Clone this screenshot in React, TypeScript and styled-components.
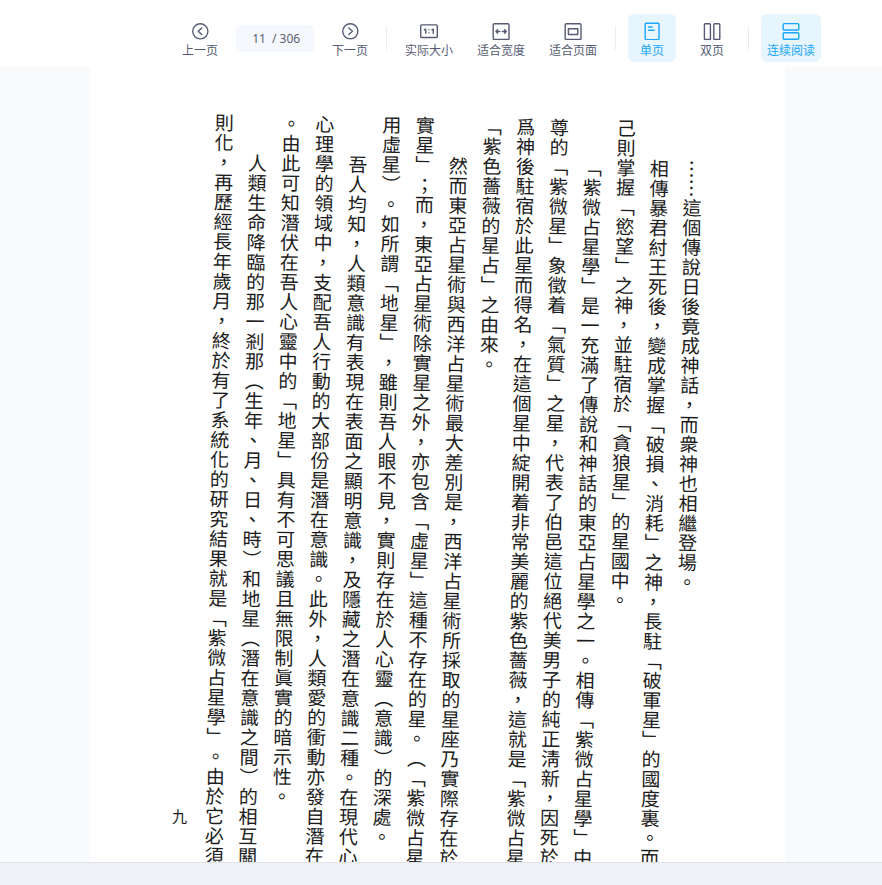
import React, { useState } from 'react';
import styled, { createGlobalStyle } from 'styled-components';

const GlobalStyle = createGlobalStyle`
  *, *::before, *::after { box-sizing: border-box; }
  html, body { margin: 0; }
  body {
    background: #f8fafc;
    font-family: 'Noto Sans', 'Noto Sans CJK SC', sans-serif;
  }
`;

const Screen = styled.div`
  display: flex;
  flex-direction: column;
  height: 100vh;
  overflow: hidden;
`;

const Toolbar = styled.header`
  display: flex;
  flex: none;
  justify-content: center;
  align-items: center;
  gap: 12px;
  height: 67px;
  padding: 14px 0 5px 115px;
  background: #fff;
`;

const ToolButton = styled.button<{ $active?: boolean }>`
  display: flex;
  flex: none;
  flex-direction: column;
  align-items: center;
  gap: 2px;
  height: 48px;
  min-width: 48px;
  padding: 8px 6px 4px;
  border: 0;
  border-radius: 6px;
  background: ${(p) => (p.$active ? '#e6f5fe' : 'transparent')};
  color: ${(p) => (p.$active ? '#1ba6f8' : '#565b73')};
  font: 12px/16px 'Noto Sans CJK SC', sans-serif;
  white-space: nowrap;
  cursor: pointer;
`;

const Icon = styled.svg`
  width: 18px;
  height: 18px;
  flex: none;
  fill: none;
  stroke: currentColor;
  stroke-width: 1.4;
  stroke-linecap: round;
  stroke-linejoin: round;
`;

const Divider = styled.span`
  flex: none;
  width: 1px;
  height: 24px;
  background: #e9ecf2;
`;

const PageField = styled.label`
  display: flex;
  flex: none;
  align-items: center;
  gap: 6px;
  width: 78px;
  height: 27px;
  padding: 2px 12px 0 10px;
  border-radius: 4px;
  background: #f5f8fd;
  color: #5c6070;
  font: 12px/18px 'Noto Sans', sans-serif;
  white-space: nowrap;
`;

const PageInput = styled.input`
  width: 20px;
  padding: 0;
  border: 0;
  outline: 0;
  background: transparent;
  color: inherit;
  font: inherit;
  text-align: right;
`;

const Viewer = styled.main`
  flex: 1;
  min-height: 0;
  padding: 0 97px 0 90px;
  overflow: hidden;
  background: #f8fafc;
`;

const Sheet = styled.article`
  display: flex;
  align-items: flex-start;
  min-height: 100%;
  padding: 46px 82px 0 82px;
  background: #fff;
  color: #1c1c1c;
  font-family: 'Noto Sans CJK TC', sans-serif;
`;

const Folio = styled.span`
  flex: none;
  width: 42px;
  padding-top: 692px;
  font-size: 15px;
  line-height: 22px;
`;

/* The scanned sheet sits slightly askew. */
const Columns = styled.div`
  display: flex;
  flex: 1;
  flex-direction: row-reverse;
  justify-content: space-between;
  transform: rotate(0.8deg);
  transform-origin: 0 0;
`;

const Column = styled.p<{ $length: number; $indent?: boolean }>`
  width: 20px;
  height: ${(p) => p.$length}px;
  margin: ${(p) => (p.$indent ? '40px' : '0')} 0 0;
  writing-mode: vertical-rl;
  font-size: 19px;
  font-weight: 400;
  line-height: 20px;
  white-space: nowrap;
  text-align: justify;
  text-align-last: justify;
  text-spacing-trim: space-all;
`;

const Footer = styled.footer`
  flex: none;
  height: 23px;
  border-top: 1px solid #dfe2e7;
  background: #f0f2f7;
`;

const columns = [
  { length: 432, indent: true, text: '……這個傳說日後竟成神話，而衆神也相繼登場。' },
  { length: 708, indent: true, text: '相傳暴君紂王死後，變成掌握「破損、消耗」之神，長駐「破軍星」的國度裏。而' },
  { length: 491, text: '己則掌握「慾望」之神，並駐宿於「貪狼星」的星國中。' },
  { length: 709, indent: true, text: '「紫微占星學」是一充滿了傳說和神話的東亞占星學之一。相傳「紫微占星學」中' },
  { length: 749, text: '尊的「紫微星」象徵着「氣質」之星，代表了伯邑這位絕代美男子的純正淸新，因死於' },
  { length: 750, text: '爲神後駐宿於此星而得名，在這個星中綻開着非常美麗的紫色薔薇，這就是「紫微占星' },
  { length: 257, text: '「紫色薔薇的星占」之由來。' },
  { length: 711, indent: true, text: '然而東亞占星術與西洋占星術最大差別是，西洋占星術所採取的星座乃實際存在於' },
  { length: 751, text: '實星」；而，東亞占星術除實星之外，亦包含「虛星」這種不存在的星。（「紫微占星' },
  { length: 731, text: '用虛星）。如所謂「地星」，雖則吾人眼不見，實則存在於人心靈（意識）的深處。' },
  { length: 711, indent: true, text: '吾人均知，人類意識有表現在表面之顯明意識，及隱藏之潛在意識二種。在現代心' },
  { length: 751, text: '心理學的領域中，支配吾人行動的大部份是潛在意識。此外，人類愛的衝動亦發自潛在' },
  { length: 692, text: '。由此可知潛伏在吾人心靈中的「地星」具有不可思議且無限制眞實的暗示性。' },
  { length: 712, indent: true, text: '人類生命降臨的那一剎那（生年、月、日、時）和地星（潛在意識之間）的相互關' },
  { length: 752, text: '則化，再歷經長年歲月，終於有了系統化的硏究結果就是「紫微占星學」。由於它必須' },
];

const icons = {
  prev: (
    <>
      <circle cx="9.3" cy="9.3" r="7.6" />
      <path d="M10.8 6 7.2 9.3l3.6 3.3" />
    </>
  ),
  next: (
    <>
      <circle cx="9.3" cy="9.3" r="7.6" />
      <path d="m7.8 6 3.6 3.3-3.6 3.3" />
    </>
  ),
  actual: (
    <>
      <rect x=".7" y="2.9" width="16.6" height="12.6" rx="1" />
      <path d="m4.4 7.9 1.3-.7v4M12 7.9l1.3-.7v4" />
      <path d="M9 7.7v.1M9 10.7v.1" />
    </>
  ),
  width: (
    <>
      <rect x="1.2" y="1.7" width="15.8" height="15.8" rx="1" />
      <path d="M4 9.5h3.8M10.4 9.5h3.8M5.7 7.7 3.9 9.5l1.8 1.8M12.5 7.7l1.8 1.8-1.8 1.8" />
    </>
  ),
  page: (
    <>
      <rect x="1.2" y="1.7" width="15.8" height="15.8" rx="1" />
      <rect x="4.4" y="6.7" width="9.4" height="5.8" />
    </>
  ),
  single: (
    <>
      <rect x="2.2" y="1.2" width="13.8" height="16.4" rx="1" />
      <path d="M5.6 5h3.4M5.6 8.2h5.6" />
    </>
  ),
  double: (
    <>
      <rect x="1.4" y="1.7" width="6" height="15.8" rx=".8" />
      <rect x="10.8" y="1.7" width="6" height="15.8" rx=".8" />
    </>
  ),
  continuous: (
    <>
      <rect x="1.2" y="1.6" width="15.6" height="6.4" rx="1" />
      <rect x="1.2" y="10.8" width="15.6" height="6.4" rx="1" />
    </>
  ),
};

type ToolProps = {
  icon: keyof typeof icons;
  label: string;
  active?: boolean;
  onClick?: () => void;
};

function Tool({ icon, label, active, onClick }: ToolProps) {
  return (
    <ToolButton type="button" $active={active} aria-pressed={active} onClick={onClick}>
      <Icon viewBox="0 0 18 18" aria-hidden="true">{icons[icon]}</Icon>
      {label}
    </ToolButton>
  );
}

export default function App() {
  const [page, setPage] = useState('11');
  const [spread, setSpread] = useState<'single' | 'double'>('single');
  const [continuous, setContinuous] = useState(true);
  const step = (by: number) =>
    setPage((p) => String(Math.min(306, Math.max(1, (Number(p) || 1) + by))));

  return (
    <Screen>
      <GlobalStyle />
      <Toolbar>
        <Tool icon="prev" label="上一页" onClick={() => step(-1)} />
        <PageField>
          <PageInput value={page} aria-label="页码" onChange={(e) => setPage(e.target.value)} />
          <span>/ 306</span>
        </PageField>
        <Tool icon="next" label="下一页" onClick={() => step(1)} />
        <Divider />
        <Tool icon="actual" label="实际大小" />
        <Tool icon="width" label="适合宽度" />
        <Tool icon="page" label="适合页面" />
        <Divider />
        <Tool icon="single" label="单页" active={spread === 'single'} onClick={() => setSpread('single')} />
        <Tool icon="double" label="双页" active={spread === 'double'} onClick={() => setSpread('double')} />
        <Divider />
        <Tool icon="continuous" label="连续阅读" active={continuous} onClick={() => setContinuous(!continuous)} />
      </Toolbar>
      <Viewer>
        <Sheet lang="zh-Hant">
          <Folio>九</Folio>
          <Columns>
            {columns.map((c) => (
              <Column key={c.text} $length={c.length} $indent={c.indent}>{c.text}</Column>
            ))}
          </Columns>
        </Sheet>
      </Viewer>
      <Footer />
    </Screen>
  );
}
